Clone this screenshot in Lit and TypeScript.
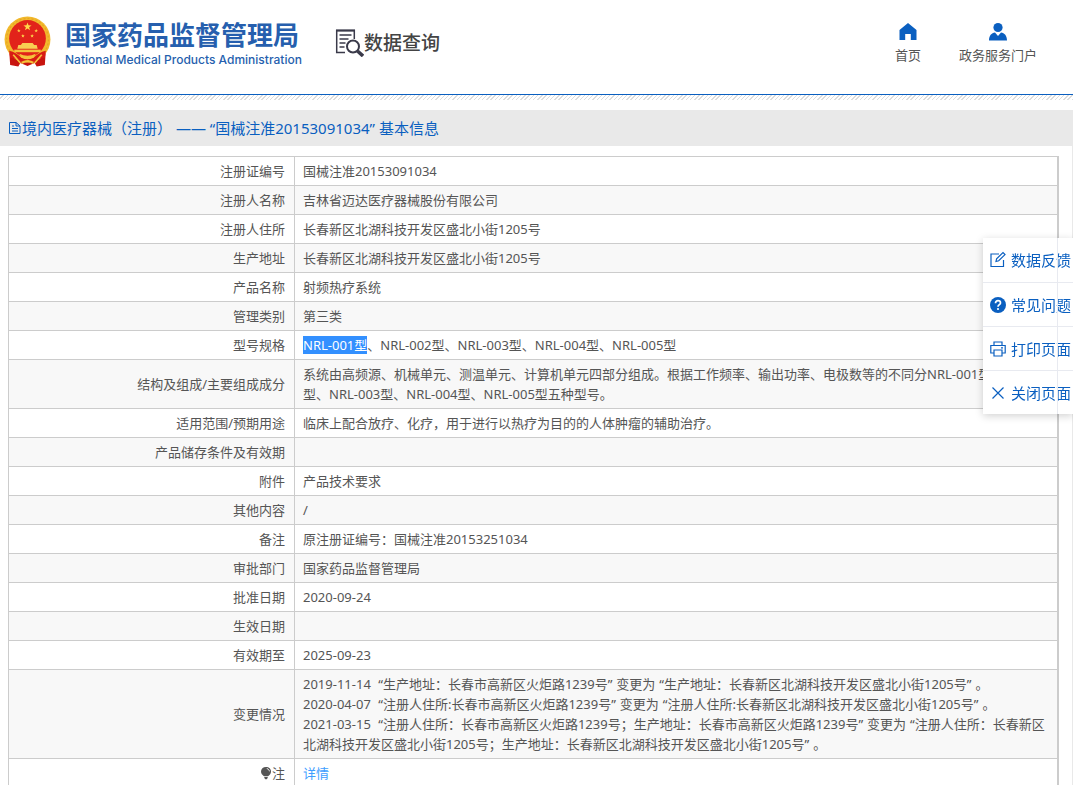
import { LitElement, html, css, svg, TemplateResult } from "lit";
import { customElement } from "lit/decorators.js";

type Cell = string | TemplateResult;

/* Curly quotes get a little air on their outer side. */
const quoted = (text: string): unknown[] =>
  text.split(/([“”])/).map((part) =>
    part === "“"
      ? html`<span class="q-open">“</span>`
      : part === "”"
        ? html`<span class="q-close">”</span>`
        : part
  );

const bulb = html`<svg class="bulb" viewBox="0 0 12 14" aria-hidden="true">
  <path d="M6 1C3 1 1 3 1 5.600c0 2 1.400 3.600 3 4.600h4c1.700-1 3-2.600 3-4.600C11 3 9 1 6 1z" fill="#555" />
  <path d="M4.300 11h3.400v1L6.700 13.200H5.300L4.300 12z" fill="#555" />
  <path d="M6.800 2.600c1.500.3 2.400 1.300 2.600 2.700" fill="none" stroke="#fff" stroke-width="1" />
</svg>`;

const ROWS: [Cell, Cell | unknown[]][] = [
  ["注册证编号", "国械注准20153091034"],
  ["注册人名称", "吉林省迈达医疗器械股份有限公司"],
  ["注册人住所", "长春新区北湖科技开发区盛北小街1205号"],
  ["生产地址", "长春新区北湖科技开发区盛北小街1205号"],
  ["产品名称", "射频热疗系统"],
  ["管理类别", "第三类"],
  ["型号规格", html`<mark>NRL-001型</mark>、NRL-002型、NRL-003型、NRL-004型、NRL-005型`],
  [
    "结构及组成/主要组成成分",
    "系统由高频源、机械单元、测温单元、计算机单元四部分组成。根据工作频率、输出功率、电极数等的不同分NRL-001型、NRL-002型、NRL-003型、NRL-004型、NRL-005型五种型号。",
  ],
  ["适用范围/预期用途", "临床上配合放疗、化疗，用于进行以热疗为目的的人体肿瘤的辅助治疗。"],
  ["产品储存条件及有效期", ""],
  ["附件", "产品技术要求"],
  ["其他内容", "/"],
  ["备注", "原注册证编号：国械注准20153251034"],
  ["审批部门", "国家药品监督管理局"],
  ["批准日期", "2020-09-24"],
  ["生效日期", ""],
  ["有效期至", "2025-09-23"],
  [
    "变更情况",
    html`${quoted("2019-11-14 “生产地址：长春市高新区火炬路1239号”变更为“生产地址：长春新区北湖科技开发区盛北小街1205号”。")}<br />${quoted("2020-04-07 “注册人住所:长春市高新区火炬路1239号”变更为“注册人住所:长春新区北湖科技开发区盛北小街1205号”。")}<br />${quoted("2021-03-15 “注册人住所：长春市高新区火炬路1239号；生产地址：长春市高新区火炬路1239号”变更为“注册人住所：长春新区北湖科技开发区盛北小街1205号；生产地址：长春新区北湖科技开发区盛北小街1205号”。")}`,
  ],
  [html`${bulb}注`, html`<a class="detail" href="#">详情</a>`],
];

const star = (cx: number, cy: number, r: number) => {
  const pts: string[] = [];
  for (let i = 0; i < 10; i++) {
    const a = (Math.PI / 5) * i - Math.PI / 2;
    const k = i % 2 ? r * 0.4 : r;
    pts.push(`${(cx + k * Math.cos(a)).toFixed(2)},${(cy + k * Math.sin(a)).toFixed(2)}`);
  }
  return svg`<polygon points=${pts.join(" ")} fill="#ffd84a" />`;
};

const emblem = html`<svg class="emblem" viewBox="0 0 46 50" aria-hidden="true">
  <path d="M5 33L6 48l8 1.500 2-3.500 7 3 7-3 2 3.500 8-1.500 1-15z" fill="#c8140f" />
  <circle cx="23" cy="23" r="22.500" fill="#f2b92c" />
  <circle cx="23" cy="23" r="20.500" fill="none" stroke="#e5a526" stroke-width="1.200" stroke-dasharray="2 2" />
  <circle cx="23" cy="22" r="18" fill="#e2231a" />
  ${star(23, 10.5, 4.2)} ${star(14.5, 14.5, 1.9)} ${star(31.5, 14.5, 1.9)} ${star(18.5, 19.5, 1.9)} ${star(27.5, 19.5, 1.9)}
  <path d="M18 26.500h10l1.500 2H32l1 3.500H13l1-3.500h2.500z" fill="#f8cf52" />
  <path d="M10 33h26v2.500H10z" fill="#f5c23c" />
  <path d="M5 34c5 1 9 4 12 7l6-2 6 2c3-3 7-6 12-7l-1 7c-4 0-7 1-9 4l-8-2-8 2c-2-3-6-4-9-4z" fill="#d81b14" />
  <path d="M15 37q8 4 16 0l-2 4q-6 3-12 0z" fill="#f5c23c" />
  <path d="M9 38l7 8M37 38l-7 8M17 46.500q6-4 12 0" fill="none" stroke="#f5c23c" stroke-width="1.600" />
</svg>`;

@customElement("app-root")
export class AppRoot extends LitElement {
  static styles = css`
    :host {
      display: block;
      min-height: 100vh;
      background: #fff;
      color: #555;
      font: 13px/20px "Noto Sans", "Noto Sans CJK SC", sans-serif;
    }
    a {
      color: inherit;
      text-decoration: none;
    }
    svg {
      display: block;
      flex: none;
    }
    header {
      display: flex;
      align-items: flex-start;
      box-sizing: border-box;
      height: 95px;
      padding: 16px 36px 0 4px;
      border-bottom: 1px solid #0a5fc0;
    }
    .brand {
      display: flex;
      gap: 14px;
      color: #265fae;
    }
    .emblem {
      width: 47px;
      height: 51px;
    }
    .names {
      display: flex;
      flex-direction: column;
    }
    .name-zh {
      margin: 0;
      font: 700 26px/36px "Noto Sans CJK SC", sans-serif;
      white-space: nowrap;
    }
    .name-en {
      font: 500 12px/16px Inter, sans-serif;
      white-space: nowrap;
    }
    .query {
      display: flex;
      align-items: center;
      height: 52px;
      margin-left: 32px;
      color: #444;
      font: 500 19px/28px "Noto Sans CJK SC", sans-serif;
      white-space: nowrap;
    }
    .query svg {
      width: 30px;
      height: 30px;
    }
    nav {
      display: flex;
      gap: 38px;
      margin-left: auto;
      padding-top: 6px;
    }
    nav a {
      display: flex;
      flex-direction: column;
      align-items: center;
      gap: 3px;
      white-space: nowrap;
    }
    nav svg {
      width: 20px;
      height: 20px;
    }
    .hatch {
      height: 5px;
      background: repeating-linear-gradient(135deg, #fff 0 2px, #ddd 2px 3px);
    }
    .title {
      display: flex;
      align-items: center;
      height: 36px;
      margin: 10px 0 0;
      padding-left: 8px;
      background: #e9e9e9;
      color: #0a5fc0;
      font-size: 15px;
      font-weight: 400;
      line-height: 36px;
    }
    .title svg {
      width: 14px;
      height: 14px;
    }
    main {
      padding: 10px 13px 0 8px;
      border-right: 1px solid #e9e9e9;
    }
    table {
      width: 100%;
      border-collapse: collapse;
      table-layout: fixed;
      border-right: 2px solid #ccc;
    }
    th,
    td {
      height: 20px;
      padding: 4px 0 4px 8px;
      border: 1px solid #ccc;
      font-weight: 400;
      text-align: left;
      vertical-align: middle;
    }
    th {
      width: 268px;
      padding-right: 9px;
      text-align: right;
    }
    tr:nth-child(even) {
      background: #f8f8f8;
    }
    mark {
      background: #3390ff;
      color: #fff;
    }
    .q-open {
      margin-left: 4px;
    }
    .q-close {
      margin-right: 4px;
    }
    .title .q-open,
    .title .q-close {
      margin: 0;
    }
    .bulb {
      display: inline-block;
      width: 12px;
      height: 14px;
      vertical-align: -2px;
    }
    .detail {
      color: #409eff;
    }
    .tools {
      position: fixed;
      top: 238px;
      right: 0;
      width: 90px;
      background: #fff;
      box-shadow: 0 2px 8px rgba(0, 0, 0, 0.18);
    }
    .tools::after {
      content: "";
      position: absolute;
      top: 0;
      bottom: 0;
      right: 15px;
      width: 1px;
      background: #e8eaf0;
    }
    .tools button {
      display: flex;
      align-items: center;
      gap: 4px;
      width: 100%;
      height: 44px;
      padding: 0 0 0 6px;
      border: 0;
      background: none;
      color: #0a5fc0;
      font: inherit;
      font-size: 15px;
      white-space: nowrap;
    }
    .tools button + button {
      border-top: 1px solid #e8eaf0;
    }
    .tools svg {
      width: 18px;
      height: 18px;
    }
  `;

  render() {
    return html`
      <header>
        <div class="brand">
          ${emblem}
          <div class="names">
            <h1 class="name-zh">国家药品监督管理局</h1>
            <span class="name-en">National Medical Products Administration</span>
          </div>
        </div>
        <div class="query">
          <svg viewBox="0 0 30 30" fill="none" stroke="#3a3a4a" aria-hidden="true">
            <path d="M11 25.500H2.700V3.500H20.300V12" stroke-width="1.500" />
            <path d="M2 3.500h19" stroke-width="2" />
            <path d="M5.500 8h12M5.500 12h9M5.500 16h6M5.500 20h5" stroke-width="1.500" />
            <circle cx="19" cy="19.500" r="6" stroke-width="2" fill="#fff" />
            <path d="M23.500 24l5.500 5" stroke-width="3.500" />
          </svg>
          <span>数据查询</span>
        </div>
        <nav>
          <a href="#">
            <svg viewBox="0 0 20 20" aria-hidden="true">
              <path d="M10 1L1.500 8v10h5.700v-6h5.600v6h5.700V8z" fill="#0a5fc0" />
            </svg>
            首页
          </a>
          <a href="#">
            <svg viewBox="0 0 20 20" aria-hidden="true">
              <circle cx="10" cy="5.500" r="4.600" fill="#0a5fc0" />
              <path d="M1 18.500c0-5 2.500-7.500 6-8l3 3.500 3-3.500c3.500.5 6 3 6 8z" fill="#0a5fc0" />
            </svg>
            政务服务门户
          </a>
        </nav>
      </header>
      <div class="hatch"></div>
      <h2 class="title">
        <svg viewBox="0 0 14 14" fill="none" stroke="#0a5fc0" aria-hidden="true">
          <path d="M1.500 1.500h6.500l4 3.500v7.500H1.500zM8 1.500V5h4M4 5h2M4 7.500h6M4 10h6" />
        </svg>
        <span>境内医疗器械（注册） —— ${quoted("“国械注准20153091034” ")}基本信息</span>
      </h2>
      <main>
        <table>
          <tbody>
            ${ROWS.map(([label, value]) => html`<tr><th scope="row">${label}</th><td>${value}</td></tr>`)}
          </tbody>
        </table>
      </main>
      <aside class="tools">
        <button type="button">
          <svg viewBox="0 0 18 18" fill="none" stroke="#0a5fc0" stroke-width="1.200" aria-hidden="true">
            <path d="M10 3H2v12.500h12.500V9" />
            <path d="M7 10.500l.6-2.800L14 1.600l2 2-6.300 6.200z" />
          </svg>
          数据反馈
        </button>
        <button type="button">
          <svg viewBox="0 0 18 18" fill="none" aria-hidden="true">
            <circle cx="9" cy="9" r="8" fill="#0a5fc0" />
            <path d="M6.500 7.200C6.500 5.500 7.500 4.700 9 4.700s2.500.9 2.500 2.200C11.500 8.500 9 8.700 9 10.700" stroke="#fff" stroke-width="1.700" />
            <circle cx="9" cy="13" r="1.100" fill="#fff" />
          </svg>
          常见问题
        </button>
        <button type="button">
          <svg viewBox="0 0 18 18" fill="none" stroke="#0a5fc0" stroke-width="1.200" aria-hidden="true">
            <path d="M5 5.500V2h8v3.500M5 13H1.800V5.500h14.400V13H13M5 10h8v6H5zM12 7.800h2" />
          </svg>
          打印页面
        </button>
        <button type="button">
          <svg viewBox="0 0 18 18" fill="none" stroke="#0a5fc0" stroke-width="1.200" aria-hidden="true">
            <path d="M3.500 3.500l11 11M14.500 3.500l-11 11" />
          </svg>
          关闭页面
        </button>
      </aside>
    `;
  }
}
